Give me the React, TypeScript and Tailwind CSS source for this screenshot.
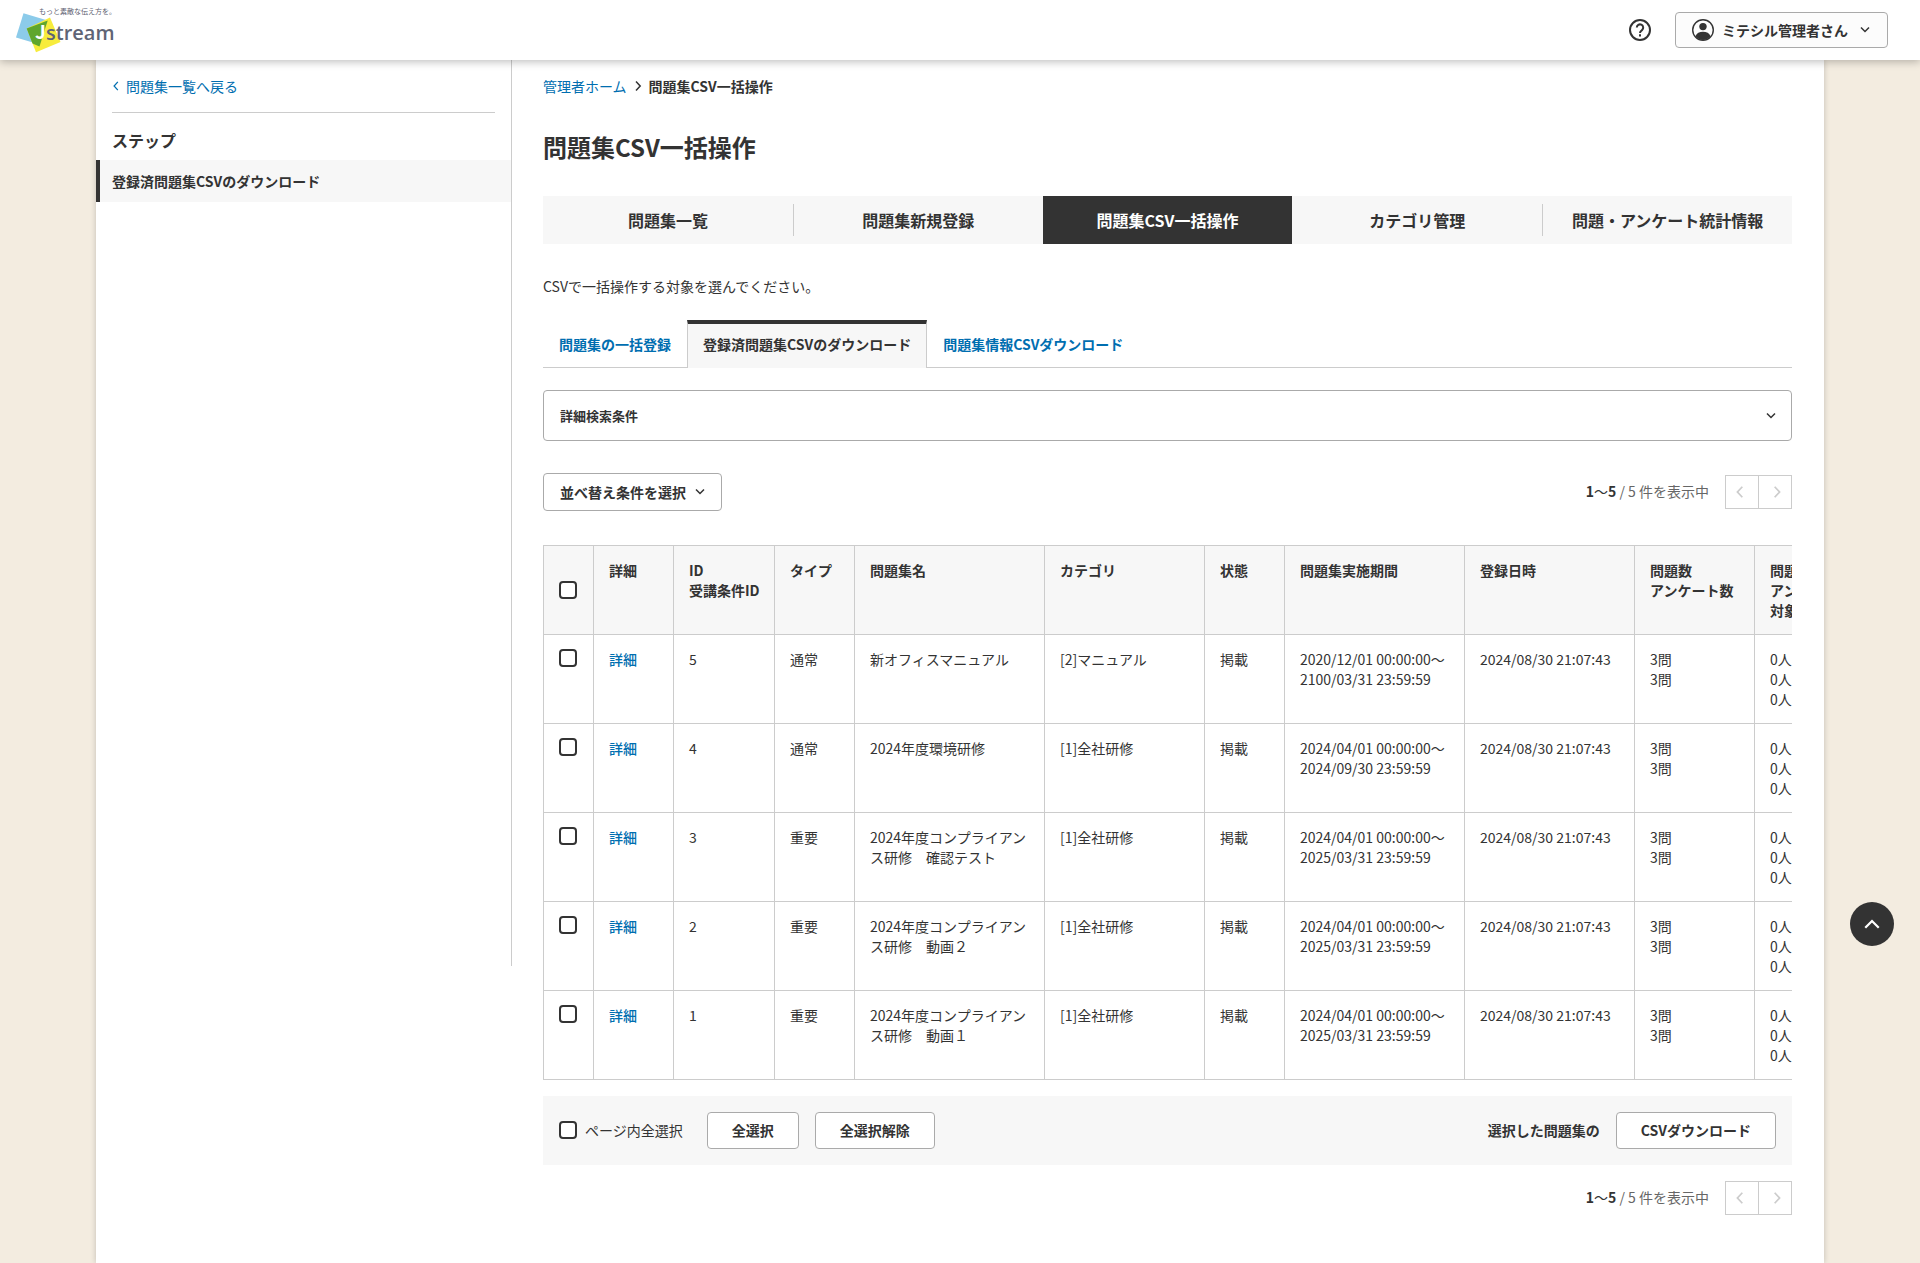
import React from 'react';

interface QuizSet {
  id: number;
  type: string;
  name: string;
  category: string;
  status: string;
  periodStart: string;
  periodEnd: string;
}

const REGISTERED_AT = '2024/08/30 21:07:43';

const quizSets: QuizSet[] = [
  { id: 5, type: '通常', name: '新オフィスマニュアル', category: '[2]マニュアル', status: '掲載', periodStart: '2020/12/01 00:00:00', periodEnd: '2100/03/31 23:59:59' },
  { id: 4, type: '通常', name: '2024年度環境研修', category: '[1]全社研修', status: '掲載', periodStart: '2024/04/01 00:00:00', periodEnd: '2024/09/30 23:59:59' },
  { id: 3, type: '重要', name: '2024年度コンプライアンス研修　確認テスト', category: '[1]全社研修', status: '掲載', periodStart: '2024/04/01 00:00:00', periodEnd: '2025/03/31 23:59:59' },
  { id: 2, type: '重要', name: '2024年度コンプライアンス研修　動画２', category: '[1]全社研修', status: '掲載', periodStart: '2024/04/01 00:00:00', periodEnd: '2025/03/31 23:59:59' },
  { id: 1, type: '重要', name: '2024年度コンプライアンス研修　動画１', category: '[1]全社研修', status: '掲載', periodStart: '2024/04/01 00:00:00', periodEnd: '2025/03/31 23:59:59' },
];

const mainTabs = [
  { label: '問題集一覧', divider: false, active: false },
  { label: '問題集新規登録', divider: true, active: false },
  { label: '問題集CSV一括操作', divider: false, active: true },
  { label: 'カテゴリ管理', divider: false, active: false },
  { label: '問題・アンケート統計情報', divider: true, active: false },
];

const headers = [
  ['詳細'],
  ['ID', '受講条件ID'],
  ['タイプ'],
  ['問題集名'],
  ['カテゴリ'],
  ['状態'],
  ['問題集実施期間'],
  ['登録日時'],
  ['問題数', 'アンケート数'],
  ['問題', 'アンケート', '対象者'],
];

const Chevron = ({ d, className }: { d: string; className: string }) => (
  <svg viewBox="0 0 12 12" className={className} fill="none" stroke="currentColor" strokeWidth="1.5" aria-hidden="true">
    <path d={d} />
  </svg>
);

const DOWN = 'M2 3.5l4 4 4-4';
const LEFT = 'M8 1.5L3.8 6 8 10.5';
const RIGHT = 'M4 1.5L8.2 6 4 10.5';

const Logo = () => (
  <svg viewBox="0 0 104 60" className="h-[60px] w-[104px]" role="img" aria-label="Jstream">
    <path d="M7.5 13.3L31.7 20.5 23.5 44.5 0 37.5Z" fill="#8ccbea" />
    <path d="M34 17.5L44.5 42 20 52.3 10.7 28.5Z" fill="#f7ec3c" />
    <path d="M10.7 28.5L31.7 20.5 23.5 46.5 16.5 43.5Z" fill="#5fa62d" />
    <text x="23" y="14" fontSize="7" fill="#5b6070">もっと素敵な伝え方を。</text>
    <text x="19" y="39" fontSize="19" fontWeight="700" fill="#fff">J</text>
    <text x="30" y="40" fontSize="20" fontWeight="600" fill="#5f6475" className="font-['Open_Sans',sans-serif]">stream</text>
  </svg>
);

const Checkbox = ({ id, label }: { id: string; label?: string }) => (
  <input
    type="checkbox"
    id={id}
    aria-label={label}
    className="block h-[18px] w-[18px] shrink-0 appearance-none rounded border-2 border-[#333] bg-white checked:bg-[#333]"
  />
);

const Pagination = () => (
  <div className="flex items-center gap-4">
    <p className="pb-0.5 text-sm text-[#666]">
      <span className="text-[#333]"><b>1</b>〜<b>5</b></span> / 5 件を表示中
    </p>
    <div className="flex h-[34px] border border-[#ccc]">
      <button type="button" disabled aria-label="前へ" className="flex w-8 items-center justify-center pr-1 text-[#ccc]">
        <Chevron d={LEFT} className="h-[14px] w-[14px]" />
      </button>
      <button type="button" disabled aria-label="次へ" className="flex w-[33px] items-center justify-center border-l border-[#ccc] pl-1 text-[#ccc]">
        <Chevron d={RIGHT} className="h-[14px] w-[14px]" />
      </button>
    </div>
  </div>
);

const Header = () => (
  <header className="sticky top-0 z-10 flex h-[60px] items-center justify-between bg-white pr-8 pl-4 shadow-[0_2px_8px_rgba(0,0,0,0.25)]">
    <a href="#home">
      <Logo />
    </a>
    <div className="flex items-center gap-6">
      <a href="#help" aria-label="ヘルプ" className="text-[#333]">
        <svg viewBox="0 0 22 22" className="h-[22px] w-[22px]" fill="none" stroke="currentColor" strokeWidth="2">
          <circle cx="11" cy="11" r="10" />
          <path d="M7.8 8.6a3.2 3.2 0 1 1 5.2 2.500c-1.100.9-2 1.400-2 2.800" />
          <path d="M11 15.3v2.200" />
        </svg>
      </a>
      <button type="button" className="flex h-9 items-center rounded border border-[#aaa] bg-[#fcfcfc] px-4 pb-px text-sm font-bold">
        <svg viewBox="0 0 22 22" className="mr-2 h-[22px] w-[22px]" aria-hidden="true">
          <circle cx="11" cy="11" r="10.3" fill="none" stroke="#333" strokeWidth="1.4" />
          <circle cx="11" cy="7.6" r="3.7" fill="#333" />
          <path d="M3.500 17.200C4.500 14 7.500 12.700 11 12.700s6.500 1.300 7.500 4.500A10 10 0 0 1 11 21a10 10 0 0 1-7.500-3.800Z" fill="#333" />
        </svg>
        ミテシル管理者さん
        <Chevron d={DOWN} className="ml-[11px] h-3 w-3" />
      </button>
    </div>
  </header>
);

const Sidebar = () => (
  <aside className="h-[906px] w-[416px] shrink-0 border-r border-[#ccc]">
    <div className="mx-4 flex h-[53px] items-center border-b border-[#ccc]">
      <a href="#list" className="flex items-center gap-1 text-sm text-[#006eb0]">
        <Chevron d="M7 1L2.500 6 7 11" className="h-[10px] w-[10px]" />
        問題集一覧へ戻る
      </a>
    </div>
    <h2 className="px-4 pt-[15px] pb-2 text-base font-bold">ステップ</h2>
    <a href="#step" className="flex h-[42px] items-center border-l-4 border-[#333] bg-[#f7f7f7] px-3 text-sm font-bold">
      登録済問題集CSVのダウンロード
    </a>
  </aside>
);

const QuizTable = () => (
  <div className="mt-[34px] overflow-hidden">
    <table className="w-[1400px] table-fixed border-collapse text-left text-sm leading-5">
      <colgroup>
        <col className="w-[50px]" />
        <col className="w-[80px]" />
        <col className="w-[101px]" />
        <col className="w-[80px]" />
        <col className="w-[190px]" />
        <col className="w-[160px]" />
        <col className="w-[80px]" />
        <col className="w-[180px]" />
        <col className="w-[170px]" />
        <col className="w-[120px]" />
        <col />
      </colgroup>
      <thead className="bg-[#f7f7f7]">
        <tr>
          <th className="border border-[#ccc] px-[15px] py-[14px] align-middle">
            <Checkbox id="check-head" label="すべて選択" />
          </th>
          {headers.map((lines, i) => (
            <th key={i} className="border border-[#ccc] py-[14px] pr-[14px] pl-[15px] align-top font-bold whitespace-nowrap">
              {lines.map((line) => (
                <div key={line}>{line}</div>
              ))}
            </th>
          ))}
        </tr>
      </thead>
      <tbody className="[&_td]:border [&_td]:border-[#ccc] [&_td]:py-[14px] [&_td]:pr-[14px] [&_td]:pl-[15px] [&_td]:align-top">
        {quizSets.map((quiz) => (
          <tr key={quiz.id}>
            <td>
              <Checkbox id={`check-${quiz.id}`} label={`${quiz.name}を選択`} />
            </td>
            <td>
              <a href={`#quiz-${quiz.id}`} className="font-medium text-[#006eb0]">詳細</a>
            </td>
            <td>{quiz.id}</td>
            <td>{quiz.type}</td>
            <td>{quiz.name}</td>
            <td>{quiz.category}</td>
            <td>{quiz.status}</td>
            <td className="whitespace-nowrap">
              {quiz.periodStart}〜<br />
              {quiz.periodEnd}
            </td>
            <td className="whitespace-nowrap">{REGISTERED_AT}</td>
            <td>
              3問<br />
              3問
            </td>
            <td>
              0人<br />
              0人<br />
              0人
            </td>
          </tr>
        ))}
      </tbody>
    </table>
  </div>
);

const BulkActions = () => (
  <div className="mt-4 mb-4 flex h-[69px] items-center bg-[#f7f7f7] px-4 text-sm">
    <div className="mr-6 flex items-center gap-2 pb-0.5">
      <Checkbox id="check-page" />
      <label htmlFor="check-page">ページ内全選択</label>
    </div>
    <button type="button" className="mr-4 h-[37px] rounded border border-[#aaa] bg-white px-6 pb-0.5 font-bold">全選択</button>
    <button type="button" className="h-[37px] rounded border border-[#aaa] bg-white px-6 pb-0.5 font-bold">全選択解除</button>
    <span className="mr-4 ml-auto pb-0.5 font-bold">選択した問題集の</span>
    <button type="button" className="h-[37px] rounded border border-[#aaa] bg-white px-6 pb-0.5 font-bold">CSVダウンロード</button>
  </div>
);

export default function App() {
  return (
    <div className="min-h-screen bg-[#f3ece0] font-['Noto_Sans_CJK_JP',sans-serif] text-[#333]">
      <Header />
      <div className="mx-auto flex min-h-[calc(100vh-60px)] w-9/10 bg-white shadow-[0_0_6px_rgba(0,0,0,0.2)]">
        <Sidebar />
        <main className="min-w-0 flex-1 pt-4 pr-8 pb-12 pl-[31px]">
          <nav aria-label="パンくず" className="flex h-5 items-center text-sm">
            <a href="#admin" className="text-[#006eb0]">管理者ホーム</a>
            <Chevron d={RIGHT} className="mx-[5px] h-3 w-3" />
            <span className="font-bold">問題集CSV一括操作</span>
          </nav>

          <h1 className="mt-[31px] text-2xl leading-10 font-bold">問題集CSV一括操作</h1>

          {/* Section tabs */}
          <nav className="mt-[29px] grid h-12 grid-cols-5 bg-[#f7f7f7] text-base font-bold">
            {mainTabs.map((tab) => (
              <a
                key={tab.label}
                href="#tab"
                className={tab.active ? 'flex items-center justify-center bg-[#333] text-white' : 'flex items-center'}
              >
                <span className={tab.divider ? 'flex h-8 flex-1 items-center justify-center border-l border-[#ccc]' : 'flex-1 text-center'}>
                  {tab.label}
                </span>
              </a>
            ))}
          </nav>

          <p className="mt-8 text-sm">CSVで一括操作する対象を選んでください。</p>

          {/* CSV operation tabs */}
          <div className="mt-6 flex h-12 text-sm font-bold text-[#006eb0]">
            <a href="#import" className="flex items-center border-b border-[#ccc] px-4">問題集の一括登録</a>
            <a href="#download" className="flex items-center border-x border-t-4 border-x-[#ccc] border-t-[#333] bg-[#f7f7f7] px-[15px] pb-1 text-[#333]">
              登録済問題集CSVのダウンロード
            </a>
            <a href="#info" className="flex flex-1 items-center border-b border-[#ccc] px-4">問題集情報CSVダウンロード</a>
          </div>

          <button type="button" className="mt-[22px] flex h-[51px] w-full items-center justify-between rounded border border-[#aaa] pr-[14px] pl-4 text-[13px] font-bold">
            詳細検索条件
            <Chevron d={DOWN} className="h-3 w-3" />
          </button>

          <div className="mt-8 flex items-center justify-between">
            <button type="button" className="flex h-[38px] items-center gap-2 rounded border border-[#aaa] pr-[15px] pl-4 text-sm font-bold">
              並べ替え条件を選択
              <Chevron d={DOWN} className="h-3 w-3" />
            </button>
            <Pagination />
          </div>

          <QuizTable />
          <BulkActions />
          <div className="flex justify-end">
            <Pagination />
          </div>
        </main>
      </div>

      <a
        href="#top"
        aria-label="ページの先頭へ"
        className="fixed top-[902px] right-[26px] flex h-11 w-11 items-center justify-center rounded-full bg-[#333] text-white"
      >
        <Chevron d="M1.500 8.500L6 4l4.500 4.500" className="h-[18px] w-[18px]" />
      </a>
    </div>
  );
}
